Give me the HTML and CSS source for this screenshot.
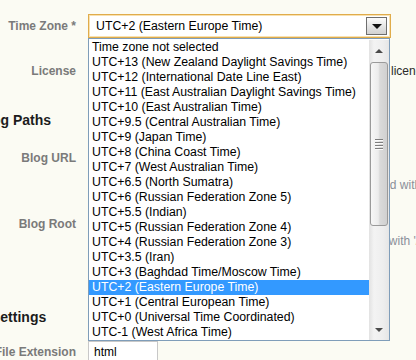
FILE: index.html
```html
<!DOCTYPE html>
<html lang="en">
<head>
    <meta charset="UTF-8">
    <meta name="viewport" content="width=device-width, initial-scale=1.0">
    <title>Blog Settings</title>
    <link rel="stylesheet" href="styles.css">
</head>
<body>

<div class="page">

    <!-- Time zone, with its list open -->
    <div class="row">
        <label class="field-label tall">Time Zone *</label>
        <div class="tz-field">
            <div class="select">
                <span class="select-value">UTC+2 (Eastern Europe Time)</span>
                <span class="select-btn"><span class="tri-down"></span></span>
            </div>
            <div class="dropdown">
                <ul class="options">
                    <li>Time zone not selected</li>
                    <li>UTC+13 (New Zealand Daylight Savings Time)</li>
                    <li>UTC+12 (International Date Line East)</li>
                    <li>UTC+11 (East Australian Daylight Savings Time)</li>
                    <li>UTC+10 (East Australian Time)</li>
                    <li>UTC+9.5 (Central Australian Time)</li>
                    <li>UTC+9 (Japan Time)</li>
                    <li>UTC+8 (China Coast Time)</li>
                    <li>UTC+7 (West Australian Time)</li>
                    <li>UTC+6.5 (North Sumatra)</li>
                    <li>UTC+6 (Russian Federation Zone 5)</li>
                    <li>UTC+5.5 (Indian)</li>
                    <li>UTC+5 (Russian Federation Zone 4)</li>
                    <li>UTC+4 (Russian Federation Zone 3)</li>
                    <li>UTC+3.5 (Iran)</li>
                    <li>UTC+3 (Baghdad Time/Moscow Time)</li>
                    <li class="selected">UTC+2 (Eastern Europe Time)</li>
                    <li>UTC+1 (Central European Time)</li>
                    <li>UTC+0 (Universal Time Coordinated)</li>
                    <li>UTC-1 (West Africa Time)</li>
                </ul>
                <div class="scrollbar">
                    <div class="sb-btn"><span class="tri-up"></span></div>
                    <div class="sb-track">
                        <div class="sb-thumb"><span class="grip"></span></div>
                    </div>
                    <div class="sb-btn"><span class="tri-small-down"></span></div>
                </div>
            </div>
        </div>
    </div>

    <div class="row row-license">
        <label class="field-label tall">License</label>
        <div class="plain-select license-select">Creative Commons</div>
        <span class="side-note">licence applies to all posts</span>
    </div>

    <h3 class="section">Blog Paths</h3>

    <div class="row row-url">
        <label class="field-label">Blog URL</label>
        <div class="field">
            <input class="text-input wide" type="text" value="http://">
            <div class="hint hint-spaced">Address of the blog as your visitors see it, it should end with '/'</div>
        </div>
    </div>

    <div class="row row-root">
        <label class="field-label">Blog Root</label>
        <div class="field">
            <input class="text-input wide" type="text" value="/">
            <div class="hint">Folder on the server that holds the blog files, starting with '/'</div>
        </div>
    </div>

    <h3 class="section section-settings">Settings</h3>

    <div class="row row-ext">
        <label class="field-label">File Extension</label>
        <input class="text-input short" type="text" value="html">
    </div>

</div>

</body>
</html>
```

FILE: styles.css
```css
body {
    margin: 0;
    height: 360px;
    overflow: hidden;
    background-color: #fbfbf3;
    font-family: "Liberation Sans", Arial, sans-serif;
    font-size: 12px;
    color: #222;
}

/* page is scrolled a little to the right */
.page {
    margin-left: -22px;
    width: 520px;
    padding-top: 14px;
}

.row {
    display: flex;
    align-items: flex-start;
    gap: 12px;
}
.field-label {
    width: 98px;
    flex: none;
    text-align: right;
    font-weight: bold;
    color: #7a7a7a;
    white-space: nowrap;
    line-height: 22px;
}
.field-label.tall {
    line-height: 24px;
}

.section {
    margin: 0;
    font-size: 14px;
    line-height: 16px;
    font-weight: bold;
    color: #1c1c1c;
    white-space: nowrap;
}
.row-license {
    margin-top: 21px;
}
.row-license + .section {
    margin-top: 29px;
}
.row-url {
    margin-top: 19px;
}
.row-root {
    margin-top: 21px;
}
.section-settings {
    margin-top: 61px;
    padding-left: 13px;
}
.row-ext {
    margin-top: 16px;
}

/* Time zone select */
.tz-field {
    position: relative;
}
.select {
    width: 303px;
    height: 24px;
    box-sizing: border-box;
    display: flex;
    align-items: center;
    padding: 0 3px 0 7px;
    background: #fff;
    border: 1px solid #e0ac4b;
    box-shadow: inset 0 0 0 1px #f8e1b1;
}
.select-value {
    flex: 1;
    font-size: 12.3px;
    color: #000;
    white-space: nowrap;
}
.select-btn {
    width: 21px;
    height: 18px;
    box-sizing: border-box;
    display: flex;
    align-items: center;
    justify-content: center;
    border: 1px solid #6e6e6e;
    background: linear-gradient(#fcfcfc, #e6e6e6 50%, #d2d2d2);
}
.tri-down {
    width: 0;
    height: 0;
    border-left: 5px solid transparent;
    border-right: 5px solid transparent;
    border-top: 5px solid #111;
}

/* open list */
.dropdown {
    position: absolute;
    top: 24px;
    left: 0;
    z-index: 10;
    width: 302px;
    height: 303px;
    box-sizing: border-box;
    padding-top: 1px;
    display: flex;
    background: #fff;
    border: 1px solid #7f9db9;
}
.options {
    flex: 1;
    margin: 0;
    padding: 0;
    list-style: none;
    overflow: hidden;
}
.options li {
    height: 15px;
    line-height: 15px;
    padding-left: 3px;
    font-size: 12.3px;
    color: #000;
    white-space: nowrap;
}
.options li.selected {
    background-color: #3399ff;
    color: #fff;
}

.scrollbar {
    width: 20px;
    flex: none;
    display: flex;
    flex-direction: column;
    background: linear-gradient(to right, #e2e2e2, #f3f3f3 25%, #eeeeee 70%, #e6e6e6);
}
.sb-btn {
    height: 21px;
    flex: none;
    display: flex;
    align-items: center;
    justify-content: center;
}
.tri-up {
    width: 0;
    height: 0;
    border-left: 4px solid transparent;
    border-right: 4px solid transparent;
    border-bottom: 4px solid #4a4a4a;
}
.tri-small-down {
    width: 0;
    height: 0;
    border-left: 4px solid transparent;
    border-right: 4px solid transparent;
    border-top: 4px solid #4a4a4a;
}
.sb-track {
    flex: 1;
    padding: 1px 1px 0 1px;
}
.sb-thumb {
    height: 164px;
    box-sizing: border-box;
    display: flex;
    align-items: center;
    justify-content: center;
    border: 1px solid #9a9a9a;
    border-radius: 3px;
    background: linear-gradient(to right, #f7f7f7, #ececec 45%, #dadada 55%, #d0d0d0);
}
.grip {
    width: 8px;
    height: 11px;
    background: repeating-linear-gradient(to bottom, #7e7e7e 0 1px, #fbfbfb 1px 2px, transparent 2px 3px);
}

/* other fields (mostly under the open list) */
.plain-select {
    height: 24px;
    box-sizing: border-box;
    padding: 0 6px;
    line-height: 22px;
    background: #fff;
    border: 1px solid #c5c5c5;
}
.license-select {
    width: 291px;
    flex: none;
}
.side-note {
    line-height: 24px;
    color: #2a2a2a;
    white-space: nowrap;
}
.text-input {
    height: 22px;
    box-sizing: border-box;
    margin: 0;
    padding: 0 5px;
    font-family: "Liberation Sans", Arial, sans-serif;
    font-size: 12px;
    color: #000;
    background: #fff;
    border: 1px solid #c8c8c8;
    border-radius: 0;
    outline: none;
}
.text-input.wide {
    width: 300px;
}
.text-input.short {
    width: 70px;
}
.hint {
    padding-left: 18px;
    line-height: 13px;
    color: #8a8f99;
    white-space: nowrap;
}
.hint-spaced {
    margin-top: 10px;
    padding-left: 15px;
}
```
